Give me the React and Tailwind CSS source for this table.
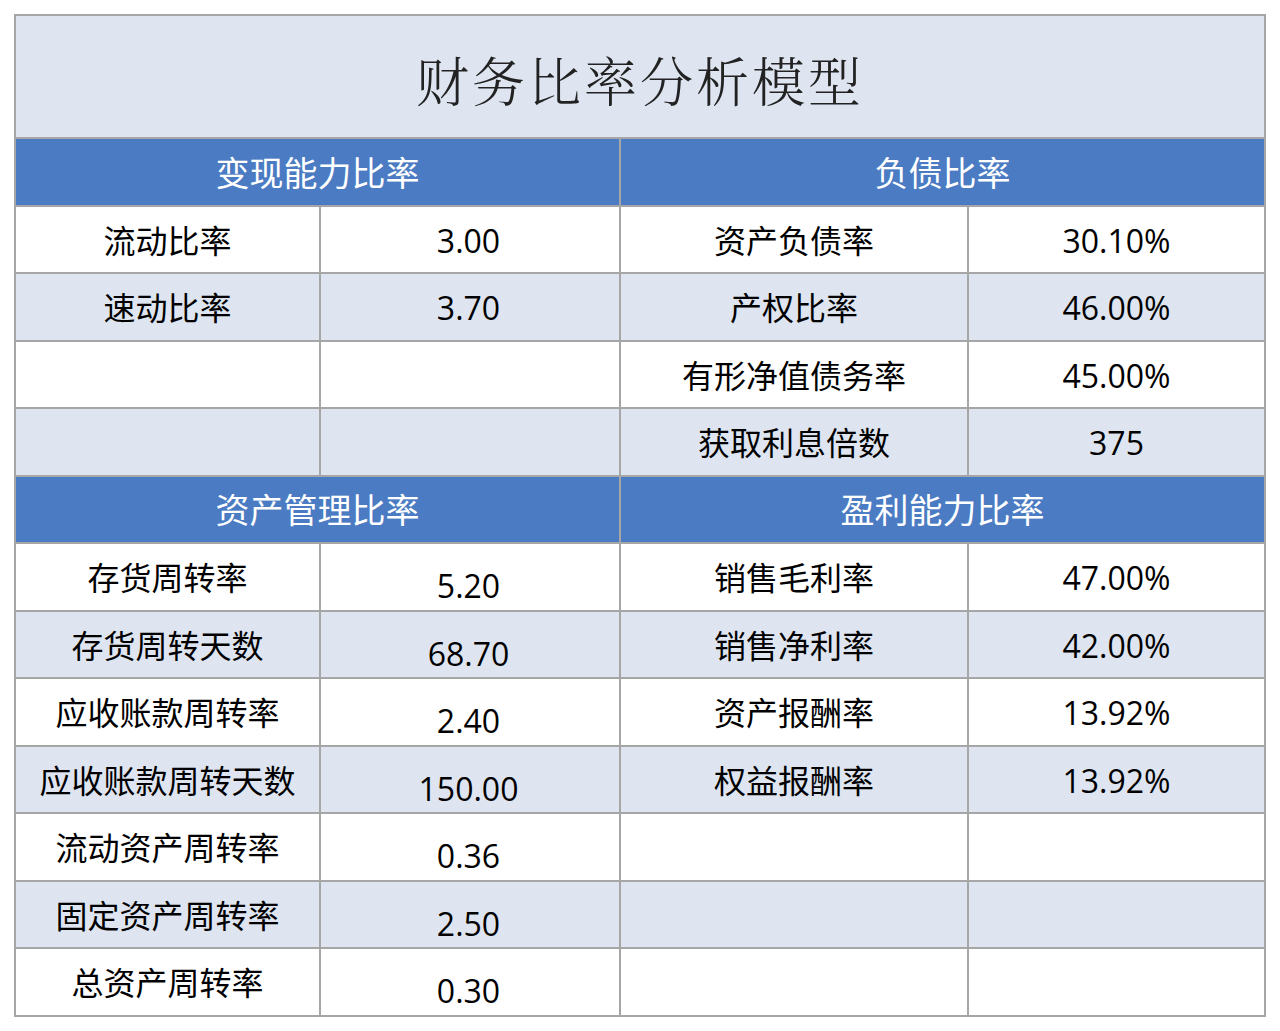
import React from 'react';

const FONT = { fontFamily: '"Open Sans", "Noto Sans CJK SC", sans-serif' };

const top = [
  ['流动比率', '3.00', '资产负债率', '30.10%'],
  ['速动比率', '3.70', '产权比率', '46.00%'],
  ['', '', '有形净值债务率', '45.00%'],
  ['', '', '获取利息倍数', '375'],
];

const bottom = [
  ['存货周转率', '5.20', '销售毛利率', '47.00%'],
  ['存货周转天数', '68.70', '销售净利率', '42.00%'],
  ['应收账款周转率', '2.40', '资产报酬率', '13.92%'],
  ['应收账款周转天数', '150.00', '权益报酬率', '13.92%'],
  ['流动资产周转率', '0.36', '', ''],
  ['固定资产周转率', '2.50', '', ''],
  ['总资产周转率', '0.30', '', ''],
];

const cell = 'border-2 border-[#a6a6a6] text-center align-middle text-[32px] leading-none text-black p-0 pt-[3px]';

function HeaderRow({ left, right }) {
  return (
    <tr className="h-[67.5px] bg-[#4a7bc3]">
      <td colSpan={2} className="border-2 border-[#a6a6a6] text-center text-white text-[34px] leading-none p-0 pt-[2px]">{left}</td>
      <td colSpan={2} className="border-2 border-[#a6a6a6] text-center text-white text-[34px] leading-none p-0 pt-[2px]">{right}</td>
    </tr>
  );
}

function DataRow({ row, i, lowValue }) {
  const bg = i % 2 === 0 ? 'bg-white' : 'bg-[#dee5f0]';
  return (
    <tr className={`h-[67.5px] ${bg}`}>
      <td className={cell}>{row[0]}</td>
      <td className={cell}>
        <div className={lowValue ? 'pt-[16px] pr-[3px]' : 'pr-[3px]'}>{row[1]}</div>
      </td>
      <td className={cell}>{row[2]}</td>
      <td className={cell}>{row[3]}</td>
    </tr>
  );
}

export default function App() {
  return (
    <div className="min-h-screen bg-white pt-[14px] pl-[14px]" style={FONT}>
      <table className="w-[1250px] table-fixed border-collapse border-2 border-[#a6a6a6]">
        <colgroup>
          <col className="w-[305px]" />
          <col className="w-[300px]" />
          <col className="w-[348px]" />
          <col className="w-[297px]" />
        </colgroup>
        <tbody>
          <tr className="h-[123px] bg-[#dee5f0]">
            <td colSpan={4} className="border-2 border-[#a6a6a6] text-center p-0 pt-[6px]">
              <span className="text-[53px] font-light tracking-[3px] text-[#222]" style={{ fontFamily: '"Noto Serif CJK SC", "Noto Sans CJK SC", serif' }}>
                财务比率分析模型
              </span>
            </td>
          </tr>
          <HeaderRow left="变现能力比率" right="负债比率" />
          {top.map((r, i) => (
            <DataRow key={'t' + i} row={r} i={i} />
          ))}
          <HeaderRow left="资产管理比率" right="盈利能力比率" />
          {bottom.map((r, i) => (
            <DataRow key={'b' + i} row={r} i={i} lowValue />
          ))}
        </tbody>
      </table>
    </div>
  );
}
